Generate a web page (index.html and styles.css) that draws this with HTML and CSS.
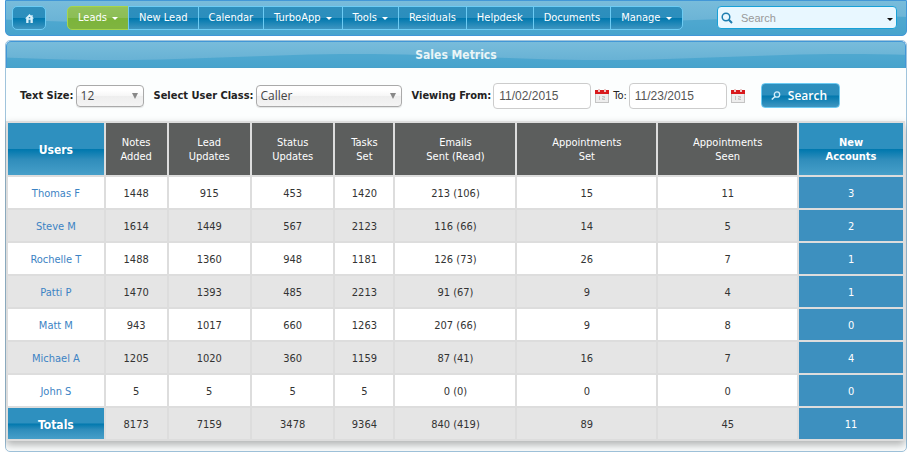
FILE: index.html
```html
<!DOCTYPE html>
<html lang="en">

<head>
    <meta charset="UTF-8">
    <meta name="viewport" content="width=device-width, initial-scale=1.0">
    <title>Sales Metrics</title>
    <link rel="stylesheet" href="styles.css">
</head>

<body>
    <nav class="navbar">
        <a href="#" class="home" aria-label="Home">
            <svg width="9" height="9" viewBox="0 0 9 9">
                <path d="M4.5 0L0 4.6h1.2V9h6.6V4.6H9L7.6 3V1H6.4v1z" fill="#d8f0fb" />
                <path d="M3.5 9V5.8h2V9zM3.8 3h1.4v1.3H3.8z" fill="#2b87b5" />
            </svg>
        </a>
        <div class="menu">
            <button type="button" class="active">Leads <span class="caret"></span></button>
            <a href="#">New Lead</a>
            <a href="#">Calendar</a>
            <button type="button">TurboApp <span class="caret"></span></button>
            <button type="button">Tools <span class="caret"></span></button>
            <a href="#">Residuals</a>
            <a href="#">Helpdesk</a>
            <a href="#">Documents</a>
            <button type="button">Manage <span class="caret"></span></button>
        </div>
        <form class="nav-search">
            <svg width="12" height="12" viewBox="0 0 12 12" fill="none" stroke="#1c7db0">
                <circle cx="5" cy="5" r="3.8" stroke-width="1.5" />
                <path d="M7.8 7.8L11 11" stroke-width="2" />
            </svg>
            <input type="text" placeholder="Search" aria-label="Search">
            <button type="button" aria-label="Search options"><span class="caret"></span></button>
        </form>
    </nav>

    <main class="panel">
        <h1>Sales Metrics</h1>

        <form id="filter-form" class="filters">
            <div class="field">
                <label for="text-size">Text Size:</label>
                <select id="text-size" class="small">
                    <option>12</option>
                </select>
            </div>
            <div class="field">
                <label for="user-class">Select User Class:</label>
                <select id="user-class">
                    <option>Caller</option>
                </select>
            </div>
            <div class="field">
                <label for="from">Viewing From:</label>
                <input type="text" id="from" value="11/02/2015">
                <button type="button" class="calendar" aria-label="Pick start date">
                    <svg width="14" height="14" viewBox="0 0 14 14">
                        <path d="M0 5h14v9H0z" fill="#c4c4c4" />
                        <path d="M1 5h12v8H1z" fill="#eee" />
                        <path d="M0 1h14v4H0z" fill="#d8191c" />
                        <path d="M3 0h2v3H3zM9 0h2v3H9z" fill="#e9c4c4" />
                        <path d="M4.500 7v4M7 7.500h2.500v1.500H7.500v1.500H10" fill="none" stroke="#c4c4c4" />
                    </svg>
                </button>
                <label for="to" class="plain">To:</label>
                <input type="text" id="to" value="11/23/2015">
                <button type="button" class="calendar" aria-label="Pick end date">
                    <svg width="14" height="14" viewBox="0 0 14 14">
                        <path d="M0 5h14v9H0z" fill="#c4c4c4" />
                        <path d="M1 5h12v8H1z" fill="#eee" />
                        <path d="M0 1h14v4H0z" fill="#d8191c" />
                        <path d="M3 0h2v3H3zM9 0h2v3H9z" fill="#e9c4c4" />
                        <path d="M4.500 7v4M7 7.500h2.500v1.500H7.500v1.500H10" fill="none" stroke="#c4c4c4" />
                    </svg>
                </button>
            </div>
            <button type="submit" class="submit">
                <svg width="10" height="9" viewBox="0 0 10 9" fill="none" stroke="#d3eefa">
                    <circle cx="6" cy="3.500" r="2.700" stroke-width="1.300" />
                    <path d="M4 5.500L0.800 8.500" stroke-width="1.600" />
                </svg>
                Search
            </button>
        </form>

        <table id="metrics">
            <colgroup>
                <col class="col-users">
                <col class="col-notes">
                <col class="col-updates">
                <col class="col-updates">
                <col class="col-tasks">
                <col class="col-emails">
                <col class="col-appts">
                <col class="col-appts">
                <col class="col-accounts">
            </colgroup>
            <thead>
                <tr>
                    <th class="glossy users">Users</th>
                    <th>Notes<br>Added</th>
                    <th>Lead<br>Updates</th>
                    <th>Status<br>Updates</th>
                    <th>Tasks<br>Set</th>
                    <th>Emails<br>Sent (Read)</th>
                    <th>Appointments<br>Set</th>
                    <th>Appointments<br>Seen</th>
                    <th class="glossy">New<br>Accounts</th>
                </tr>
            </thead>
            <tbody>
                <tr>
                    <td><a href="#">Thomas F</a></td>
                    <td>1448</td>
                    <td>915</td>
                    <td>453</td>
                    <td>1420</td>
                    <td>213 (106)</td>
                    <td>15</td>
                    <td>11</td>
                    <td class="new">3</td>
                </tr>
                <tr>
                    <td><a href="#">Steve M</a></td>
                    <td>1614</td>
                    <td>1449</td>
                    <td>567</td>
                    <td>2123</td>
                    <td>116 (66)</td>
                    <td>14</td>
                    <td>5</td>
                    <td class="new">2</td>
                </tr>
                <tr>
                    <td><a href="#">Rochelle T</a></td>
                    <td>1488</td>
                    <td>1360</td>
                    <td>948</td>
                    <td>1181</td>
                    <td>126 (73)</td>
                    <td>26</td>
                    <td>7</td>
                    <td class="new">1</td>
                </tr>
                <tr>
                    <td><a href="#">Patti P</a></td>
                    <td>1470</td>
                    <td>1393</td>
                    <td>485</td>
                    <td>2213</td>
                    <td>91 (67)</td>
                    <td>9</td>
                    <td>4</td>
                    <td class="new">1</td>
                </tr>
                <tr>
                    <td><a href="#">Matt M</a></td>
                    <td>943</td>
                    <td>1017</td>
                    <td>660</td>
                    <td>1263</td>
                    <td>207 (66)</td>
                    <td>9</td>
                    <td>8</td>
                    <td class="new">0</td>
                </tr>
                <tr>
                    <td><a href="#">Michael A</a></td>
                    <td>1205</td>
                    <td>1020</td>
                    <td>360</td>
                    <td>1159</td>
                    <td>87 (41)</td>
                    <td>16</td>
                    <td>7</td>
                    <td class="new">4</td>
                </tr>
                <tr>
                    <td><a href="#">John S</a></td>
                    <td>5</td>
                    <td>5</td>
                    <td>5</td>
                    <td>5</td>
                    <td>0 (0)</td>
                    <td>0</td>
                    <td>0</td>
                    <td class="new">0</td>
                </tr>
            </tbody>
            <tfoot>
                <tr>
                    <th class="glossy users">Totals</th>
                    <td>8173</td>
                    <td>7159</td>
                    <td>3478</td>
                    <td>9364</td>
                    <td>840 (419)</td>
                    <td>89</td>
                    <td>45</td>
                    <td class="new">11</td>
                </tr>
            </tfoot>
        </table>
    </main>
</body>

</html>
```
FILE: styles.css
```css
* {
    box-sizing: border-box;
}

body {
    margin: 0 11px 0 5px;
    background: #fff;
    color: #333;
    font-family: "DejaVu Sans Condensed", "Noto Sans", sans-serif;
    font-size: 11px;
}

a {
    text-decoration: none;
}

button,
input,
select {
    font-family: inherit;
    margin: 0;
}

/* wave shared by the top bar and the panel title */
.navbar,
h1 {
    background: url("data:image/svg+xml,%3Csvg xmlns='http://www.w3.org/2000/svg' width='490' height='40'%3E%3Cpath d='M0 18C90 18 155 12 245 12S400 18 490 18V40H0z' fill='%23188fc2' fill-opacity='.35'/%3E%3C/svg%3E") repeat-x 105px 3px, linear-gradient(#78bcdb, #62aed2);
}

.navbar {
    display: flex;
    align-items: flex-start;
    height: 36px;
    padding: 5px 9px 0 6px;
    border: 1px solid #4297d7;
    border-radius: 0 0 5px 5px;
}

.home,
.menu > *,
.submit {
    border: 1px solid #6ccbf3;
    background: linear-gradient(#2e8fbd, #2b8ebd 49%, #0078ae 51%, #3f96c1);
    color: #fff;
}

.home {
    display: flex;
    flex: none;
    align-items: center;
    justify-content: center;
    width: 34px;
    height: 24px;
    border-radius: 5px;
}

.menu {
    display: flex;
    margin-left: 21px;
}

.menu > * {
    height: 24px;
    padding: 0 10px;
    margin-right: -1px;
    font-size: 11px;
    line-height: 22px;
    white-space: nowrap;
}

.menu > :first-child {
    border-radius: 5px 0 0 5px;
}

.menu > :last-child {
    border-radius: 0 5px 5px 0;
}

.menu > .active {
    border-color: #a6d64b;
    background: linear-gradient(#92c25b, #8cbd56 49%, #7bb43a 51%, #80b440);
}

.caret {
    display: inline-block;
    margin-left: 2px;
    vertical-align: 1px;
    border-top: 3px solid;
    border-left: 3px solid transparent;
    border-right: 3px solid transparent;
}

.nav-search {
    display: flex;
    flex: none;
    align-items: center;
    width: 180px;
    height: 23px;
    margin-left: auto;
    padding: 0 3px;
    border: 1px solid #17a1d8;
    border-radius: 4px;
    background: #e8f7ff;
}

.nav-search input {
    flex: 1;
    min-width: 0;
    padding: 0 8px;
    border: 0;
    background: none;
    font: 11px "Liberation Sans", Arial, sans-serif;
}

.nav-search input::placeholder {
    color: #999;
}

.nav-search button {
    padding: 0;
    border: 0;
    background: none;
    color: #111;
}

.panel {
    margin-top: 4px;
    padding-bottom: 10px;
    border: 1px solid #a0c4dc;
    border-radius: 5px;
    background: #fcfefe;
}

h1 {
    height: 27px;
    margin: 0;
    border: 1px solid #4297d7;
    border-bottom-color: #48a1ca;
    border-radius: 5px 5px 0 0;
    background-position: 105px 0, 0 0;
    color: #eaf5f7;
    font-size: 12px;
    line-height: 27px;
    text-align: center;
}

.filters {
    display: flex;
    align-items: center;
    gap: 10px;
    height: 53px;
    padding: 2px 14px 0;
}

.field {
    display: flex;
    align-items: center;
    gap: 2px;
}

label {
    color: #222;
    font-weight: bold;
    white-space: nowrap;
}

label.plain {
    font-weight: normal;
}

select {
    width: 146px;
    height: 22px;
    padding: 0 4px;
    appearance: none;
    border: 1px solid #aaa;
    border-radius: 4px;
    background: url("data:image/svg+xml,%3Csvg xmlns='http://www.w3.org/2000/svg' width='6' height='6'%3E%3Cpath d='M0 0h6L3 6z' fill='%23888'/%3E%3C/svg%3E") no-repeat right 5px center, linear-gradient(#fff 20%, #f6f6f6 50%, #eee 52%, #f4f4f4);
    box-shadow: 0 1px 1px rgba(0, 0, 0, .1);
    color: #444;
    font-family: "Open Sans", sans-serif;
    font-size: 12px;
    line-height: 20px;
}

select.small {
    width: 68px;
}

.field input {
    width: 98px;
    height: 26px;
    padding: 0 5px;
    border: 1px solid #ccc;
    border-radius: 4px;
    background: #fff;
    color: #555;
    font: 12px "Liberation Sans", Arial, sans-serif;
}

.calendar {
    display: flex;
    padding: 0 2px;
    border: 0;
    background: none;
}

.submit {
    display: flex;
    align-items: center;
    gap: 7px;
    height: 25px;
    margin-left: 4px;
    padding: 0 12px 0 9px;
    border-radius: 4px;
    font-family: "Open Sans", sans-serif;
    font-size: 12px;
    font-weight: 600;
}

table {
    width: calc(100% - 1px);
    table-layout: fixed;
    border-collapse: collapse;
    box-shadow: 0 4px 8px rgba(0, 0, 0, .3);
    text-align: center;
}

.col-users {
    width: 10.9%;
}

.col-notes {
    width: 7%;
}

.col-updates {
    width: 9.3%;
}

.col-tasks {
    width: 6.7%;
}

.col-emails {
    width: 13.6%;
}

.col-appts {
    width: 15.7%;
}

.col-accounts {
    width: 11.8%;
}

td,
th {
    height: 33px;
    padding: 2px 0 0;
    border: 2px solid #ddd;
    line-height: 14px;
}

th {
    background: #5c5e5d;
    color: #fff;
    font-weight: normal;
}

thead th {
    height: 54px;
}

td {
    background: #fff;
}

td a {
    color: #3c83c4;
}

tbody tr:nth-child(even) td,
tfoot td {
    background: #e5e5e5;
}

th.glossy {
    background: linear-gradient(#2e90bf 49%, #0078ae 51%, #2f8dbb 70%, #479fc9);
    font-weight: bold;
}

th.users {
    font-size: 12px;
}

table td.new,
tbody tr:nth-child(even) td.new {
    background: #3d90bf;
    color: #fff;
}
```
